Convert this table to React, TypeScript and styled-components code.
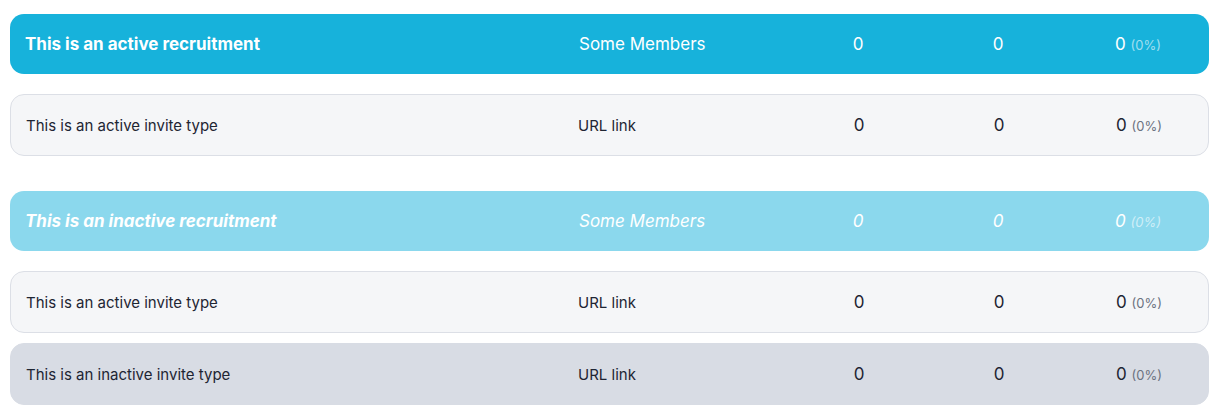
import React from "react";
import styled, { createGlobalStyle, css } from "styled-components";

const Global = createGlobalStyle`
  html, body { margin: 0; padding: 0; background: #ffffff; }
  body { font-family: "Inter", "Noto Sans", sans-serif; }
`;

const Page = styled.div`
  padding: 14px 10px 9px 10px;
  display: flex;
  flex-direction: column;
  gap: 35px;
`;

const Group = styled.section`
  display: flex;
  flex-direction: column;
`;

const RowBase = css`
  display: grid;
  grid-template-columns: 552px 211px 140px 140px 140px;
  align-items: center;
  padding-left: 15px;
  box-sizing: border-box;
  border-radius: 14px;
`;

const Header = styled.div<{ $inactive?: boolean }>`
  ${RowBase}
  height: 60px;
  margin-bottom: 20px;
  color: #ffffff;
  background: ${(p) => (p.$inactive ? "#8bd8ed" : "#17b2db")};
  font-style: ${(p) => (p.$inactive ? "italic" : "normal")};
`;

const InviteList = styled.div`
  display: flex;
  flex-direction: column;
  gap: 10px;
`;

const Invite = styled.div<{ $inactive?: boolean }>`
  ${RowBase}
  height: 62px;
  color: #1e2533;
  background: ${(p) => (p.$inactive ? "#d8dce4" : "#f5f6f8")};
  border: 1px solid ${(p) => (p.$inactive ? "#d8dce4" : "#dcdfe6")};
`;

const Title = styled.div<{ $bold?: boolean }>`
  font-size: ${(p) => (p.$bold ? "17px" : "15px")};
  font-weight: ${(p) => (p.$bold ? 700 : 400)};
`;

const TypeCell = styled.div<{ $big?: boolean }>`
  font-size: ${(p) => (p.$big ? "17px" : "15px")};
  padding-left: ${(p) => (p.$big ? "2px" : "0")};
`;

const Num = styled.div`
  text-align: center;
  font-size: 17px;
`;

const Pct = styled.span<{ $light?: boolean }>`
  font-size: 13px;
  color: ${(p) => (p.$light ? "rgba(255,255,255,0.6)" : "#6b7280")};
`;

type InviteData = { name: string; inactive?: boolean };

const Counts = ({ light }: { light?: boolean }) => (
  <>
    <Num>0</Num>
    <Num>0</Num>
    <Num>
      0 <Pct $light={light}>(0%)</Pct>
    </Num>
  </>
);

const Recruitment = ({
  title,
  inactive,
  invites,
}: {
  title: string;
  inactive?: boolean;
  invites: InviteData[];
}) => (
  <Group>
    <Header $inactive={inactive}>
      <Title $bold>{title}</Title>
      <TypeCell $big>Some Members</TypeCell>
      <Counts light />
    </Header>
    <InviteList>
      {invites.map((inv, i) => (
        <Invite key={i} $inactive={inv.inactive}>
          <Title>{inv.name}</Title>
          <TypeCell>URL link</TypeCell>
          <Counts />
        </Invite>
      ))}
    </InviteList>
  </Group>
);

export default function App() {
  return (
    <>
      <Global />
      <Page>
        <Recruitment
          title="This is an active recruitment"
          invites={[{ name: "This is an active invite type" }]}
        />
        <Recruitment
          title="This is an inactive recruitment"
          inactive
          invites={[
            { name: "This is an active invite type" },
            { name: "This is an inactive invite type", inactive: true },
          ]}
        />
      </Page>
    </>
  );
}
